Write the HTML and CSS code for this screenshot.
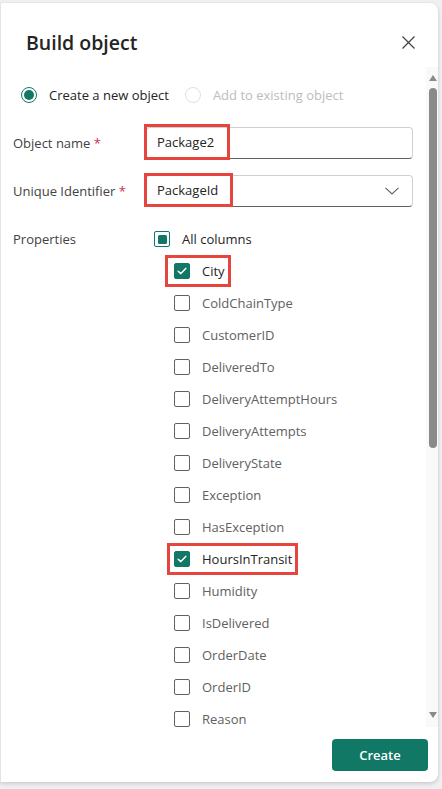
FILE: index.html
```html
<!DOCTYPE html>
<html lang="en">
<head>
<meta charset="utf-8">
<title>Build object</title>
<link rel="stylesheet" href="styles.css">
</head>
<body>
<div class="card">
  <header class="header">
    <h1 class="title">Build object</h1>
    <button class="close" aria-label="Close">
      <svg width="13" height="13" viewBox="0 0 13 13"><path d="M0.5 0.5 L12.5 12.5 M12.5 0.5 L0.5 12.5" stroke="#424242" stroke-width="1.2" fill="none"/></svg>
    </button>
  </header>
  <div class="scroll-area">
    <div class="content">
      <div class="radios">
        <label class="radio checked"><span class="radio-circle"></span>Create a new object</label>
        <label class="radio disabled"><span class="radio-circle"></span>Add to existing object</label>
      </div>
      <div class="field-row row-name">
        <div class="field-label">Object name <span class="req">*</span></div>
        <div class="input"><span class="hl-text hl-name">Package2</span></div>
      </div>
      <div class="field-row row-id">
        <div class="field-label">Unique Identifier <span class="req">*</span></div>
        <div class="input select">
          <span class="hl-text hl-id">PackageId</span>
          <svg class="chevron" width="14" height="8" viewBox="0 0 14 8"><path d="M0.5 0.8 L7 7 L13.5 0.8" stroke="#616161" stroke-width="1.1" fill="none"/></svg>
        </div>
      </div>
      <div class="props-row">
        <div class="field-label props-label">Properties</div>
        <div class="props">
          <div class="check-row all"><span class="cb indeterminate"></span><span class="cb-text">All columns</span></div>
          <ul class="items">
            <li class="check-row item checked"><span class="item-inner hl hl-city"><span class="cb"><svg width="10" height="8" viewBox="0 0 10 8"><path d="M1.2 4.2 L3.8 6.6 L8.8 1.4" stroke="#fff" stroke-width="1.5" fill="none" stroke-linecap="round" stroke-linejoin="round"/></svg></span><span class="cb-text">City</span></span></li>
            <li class="check-row item"><span class="item-inner"><span class="cb"></span><span class="cb-text">ColdChainType</span></span></li>
            <li class="check-row item"><span class="item-inner"><span class="cb"></span><span class="cb-text">CustomerID</span></span></li>
            <li class="check-row item"><span class="item-inner"><span class="cb"></span><span class="cb-text">DeliveredTo</span></span></li>
            <li class="check-row item"><span class="item-inner"><span class="cb"></span><span class="cb-text">DeliveryAttemptHours</span></span></li>
            <li class="check-row item"><span class="item-inner"><span class="cb"></span><span class="cb-text">DeliveryAttempts</span></span></li>
            <li class="check-row item"><span class="item-inner"><span class="cb"></span><span class="cb-text">DeliveryState</span></span></li>
            <li class="check-row item"><span class="item-inner"><span class="cb"></span><span class="cb-text">Exception</span></span></li>
            <li class="check-row item"><span class="item-inner"><span class="cb"></span><span class="cb-text">HasException</span></span></li>
            <li class="check-row item checked"><span class="item-inner hl hl-hours"><span class="cb"><svg width="10" height="8" viewBox="0 0 10 8"><path d="M1.2 4.2 L3.8 6.6 L8.8 1.4" stroke="#fff" stroke-width="1.5" fill="none" stroke-linecap="round" stroke-linejoin="round"/></svg></span><span class="cb-text">HoursInTransit</span></span></li>
            <li class="check-row item"><span class="item-inner"><span class="cb"></span><span class="cb-text">Humidity</span></span></li>
            <li class="check-row item"><span class="item-inner"><span class="cb"></span><span class="cb-text">IsDelivered</span></span></li>
            <li class="check-row item"><span class="item-inner"><span class="cb"></span><span class="cb-text">OrderDate</span></span></li>
            <li class="check-row item"><span class="item-inner"><span class="cb"></span><span class="cb-text">OrderID</span></span></li>
            <li class="check-row item"><span class="item-inner"><span class="cb"></span><span class="cb-text">Reason</span></span></li>
          </ul>
        </div>
      </div>
    </div>
    <div class="scrollbar">
      <span class="arrow up"></span>
      <span class="thumb"></span>
      <span class="spacer"></span>
      <span class="arrow down"></span>
    </div>
  </div>
  <footer class="footer">
    <button class="create">Create</button>
  </footer>
</div>
</body>
</html>
```

FILE: styles.css
```css
* { box-sizing: border-box; }
html, body { margin: 0; padding: 0; }
body {
  background: #f0f0f0;
  font-family: "Open Sans", "Noto Sans", sans-serif;
  font-size: 13px;
  color: #242424;
  height: 789px;
  overflow: hidden;
}
.card {
  margin-top: 3px;
  width: 438px;
  height: 779px;
  background: #fff;
  border-left: 1px solid #e3e3e3;
  border-radius: 0 8px 8px 0;
  box-shadow: 0 2px 4px rgba(0,0,0,0.14), 0 0 2px rgba(0,0,0,0.08);
  display: flex;
  flex-direction: column;
}
.header {
  height: 64px;
  flex: none;
  display: flex;
  align-items: flex-start;
  justify-content: space-between;
  padding: 26px 23px 0 25px;
}
.title {
  margin: 0;
  font-size: 19.5px;
  line-height: 28px;
  font-weight: 600;
  color: #242424;
}
.close {
  border: 0;
  background: none;
  padding: 0;
  margin-top: 7px;
  width: 13px;
  height: 13px;
  display: block;
}
.close svg { display: block; }
.scroll-area {
  height: 660px;
  flex: none;
  display: flex;
  overflow: hidden;
}
.content {
  flex: 1;
  padding: 18px 0 0 12px;
}
.radios {
  height: 20px;
  display: flex;
  align-items: center;
  padding-left: 8px;
}
.radio {
  display: flex;
  align-items: center;
  color: #242424;
  margin-right: 16px;
}
.radio-circle {
  width: 16px;
  height: 16px;
  border-radius: 50%;
  border: 1px solid #117865;
  margin-right: 12px;
  display: flex;
  align-items: center;
  justify-content: center;
}
.radio.checked .radio-circle::after {
  content: "";
  width: 10px;
  height: 10px;
  border-radius: 50%;
  background: #117865;
}
.radio.disabled { color: #bdbdbd; }
.radio.disabled .radio-circle { border-color: #e0e0e0; }
.field-row {
  display: flex;
  align-items: center;
  height: 32px;
}
.row-name { margin-top: 22px; }
.row-id { margin-top: 16px; }
.field-label {
  width: 133px;
  flex: none;
  color: #424242;
}
.req { color: #c4314b; }
.input {
  width: 267px;
  height: 32px;
  border: 1px solid #d1d1d1;
  border-bottom-color: #616161;
  border-radius: 4px;
  display: flex;
  align-items: center;
  justify-content: space-between;
  color: #242424;
}
.hl-text {
  border: 3px solid #e5453c;
  margin-left: -3px;
  padding-left: 10px;
  display: flex;
  align-items: center;
  flex: none;
}
.hl-name { width: 86px; height: 36px; margin-top: -3px; }
.hl-id { width: 89px; height: 34px; margin-top: -2px; }
.chevron { margin-right: 13px; display: block; }
.props-row {
  display: flex;
  margin-top: 16px;
}
.props-label { height: 32px; line-height: 32px; }
.props { padding-left: 8px; }
.check-row {
  height: 32px;
  display: flex;
  align-items: center;
}
.items {
  list-style: none;
  margin: 0;
  padding: 0 0 0 20px;
}
.item-inner {
  display: flex;
  align-items: center;
}
.cb {
  width: 16px;
  height: 16px;
  border: 1px solid #616161;
  border-radius: 2px;
  flex: none;
  margin-right: 12px;
  display: flex;
  align-items: center;
  justify-content: center;
}
.cb svg { display: block; }
.cb.indeterminate { border-color: #117865; }
.cb.indeterminate::after {
  content: "";
  width: 9px;
  height: 9px;
  border-radius: 1.5px;
  background: #117865;
}
.all .cb-text { color: #242424; }
.item .cb-text { color: #616161; }
.item.checked .cb { background: #117865; border-color: #117865; }
.item.checked .cb-text { color: #242424; }
.hl {
  outline: 3px solid #e5453c;
  padding: 4px 3px 4px 6px;
  margin: -4px -3px -4px -6px;
}
.hl-hours { padding-left: 4px; margin-left: -4px; }
.scrollbar {
  width: 12px;
  flex: none;
  background: #f9f9f9;
  display: flex;
  flex-direction: column;
  align-items: flex-start;
  padding: 8px 0 9px 3px;
}
.arrow {
  width: 0;
  height: 0;
  border-left: 4.5px solid transparent;
  border-right: 4.5px solid transparent;
  display: block;
}
.arrow.up { border-bottom: 6px solid #8a8a8a; }
.arrow.down { border-top: 6px solid #8a8a8a; }
.thumb {
  display: block;
  width: 8px;
  height: 360px;
  margin-top: 7px;
  border-radius: 4px;
  background: #8a8a8a;
}
.spacer { flex: 1; }
.footer {
  flex: 1;
  display: flex;
  justify-content: flex-end;
  align-items: flex-start;
  padding: 12px 10px 0 0;
}
.create {
  width: 96px;
  height: 32px;
  border: 0;
  border-radius: 4px;
  background: #117865;
  color: #fff;
  font-family: inherit;
  font-size: 13px;
  font-weight: 600;
}
```
